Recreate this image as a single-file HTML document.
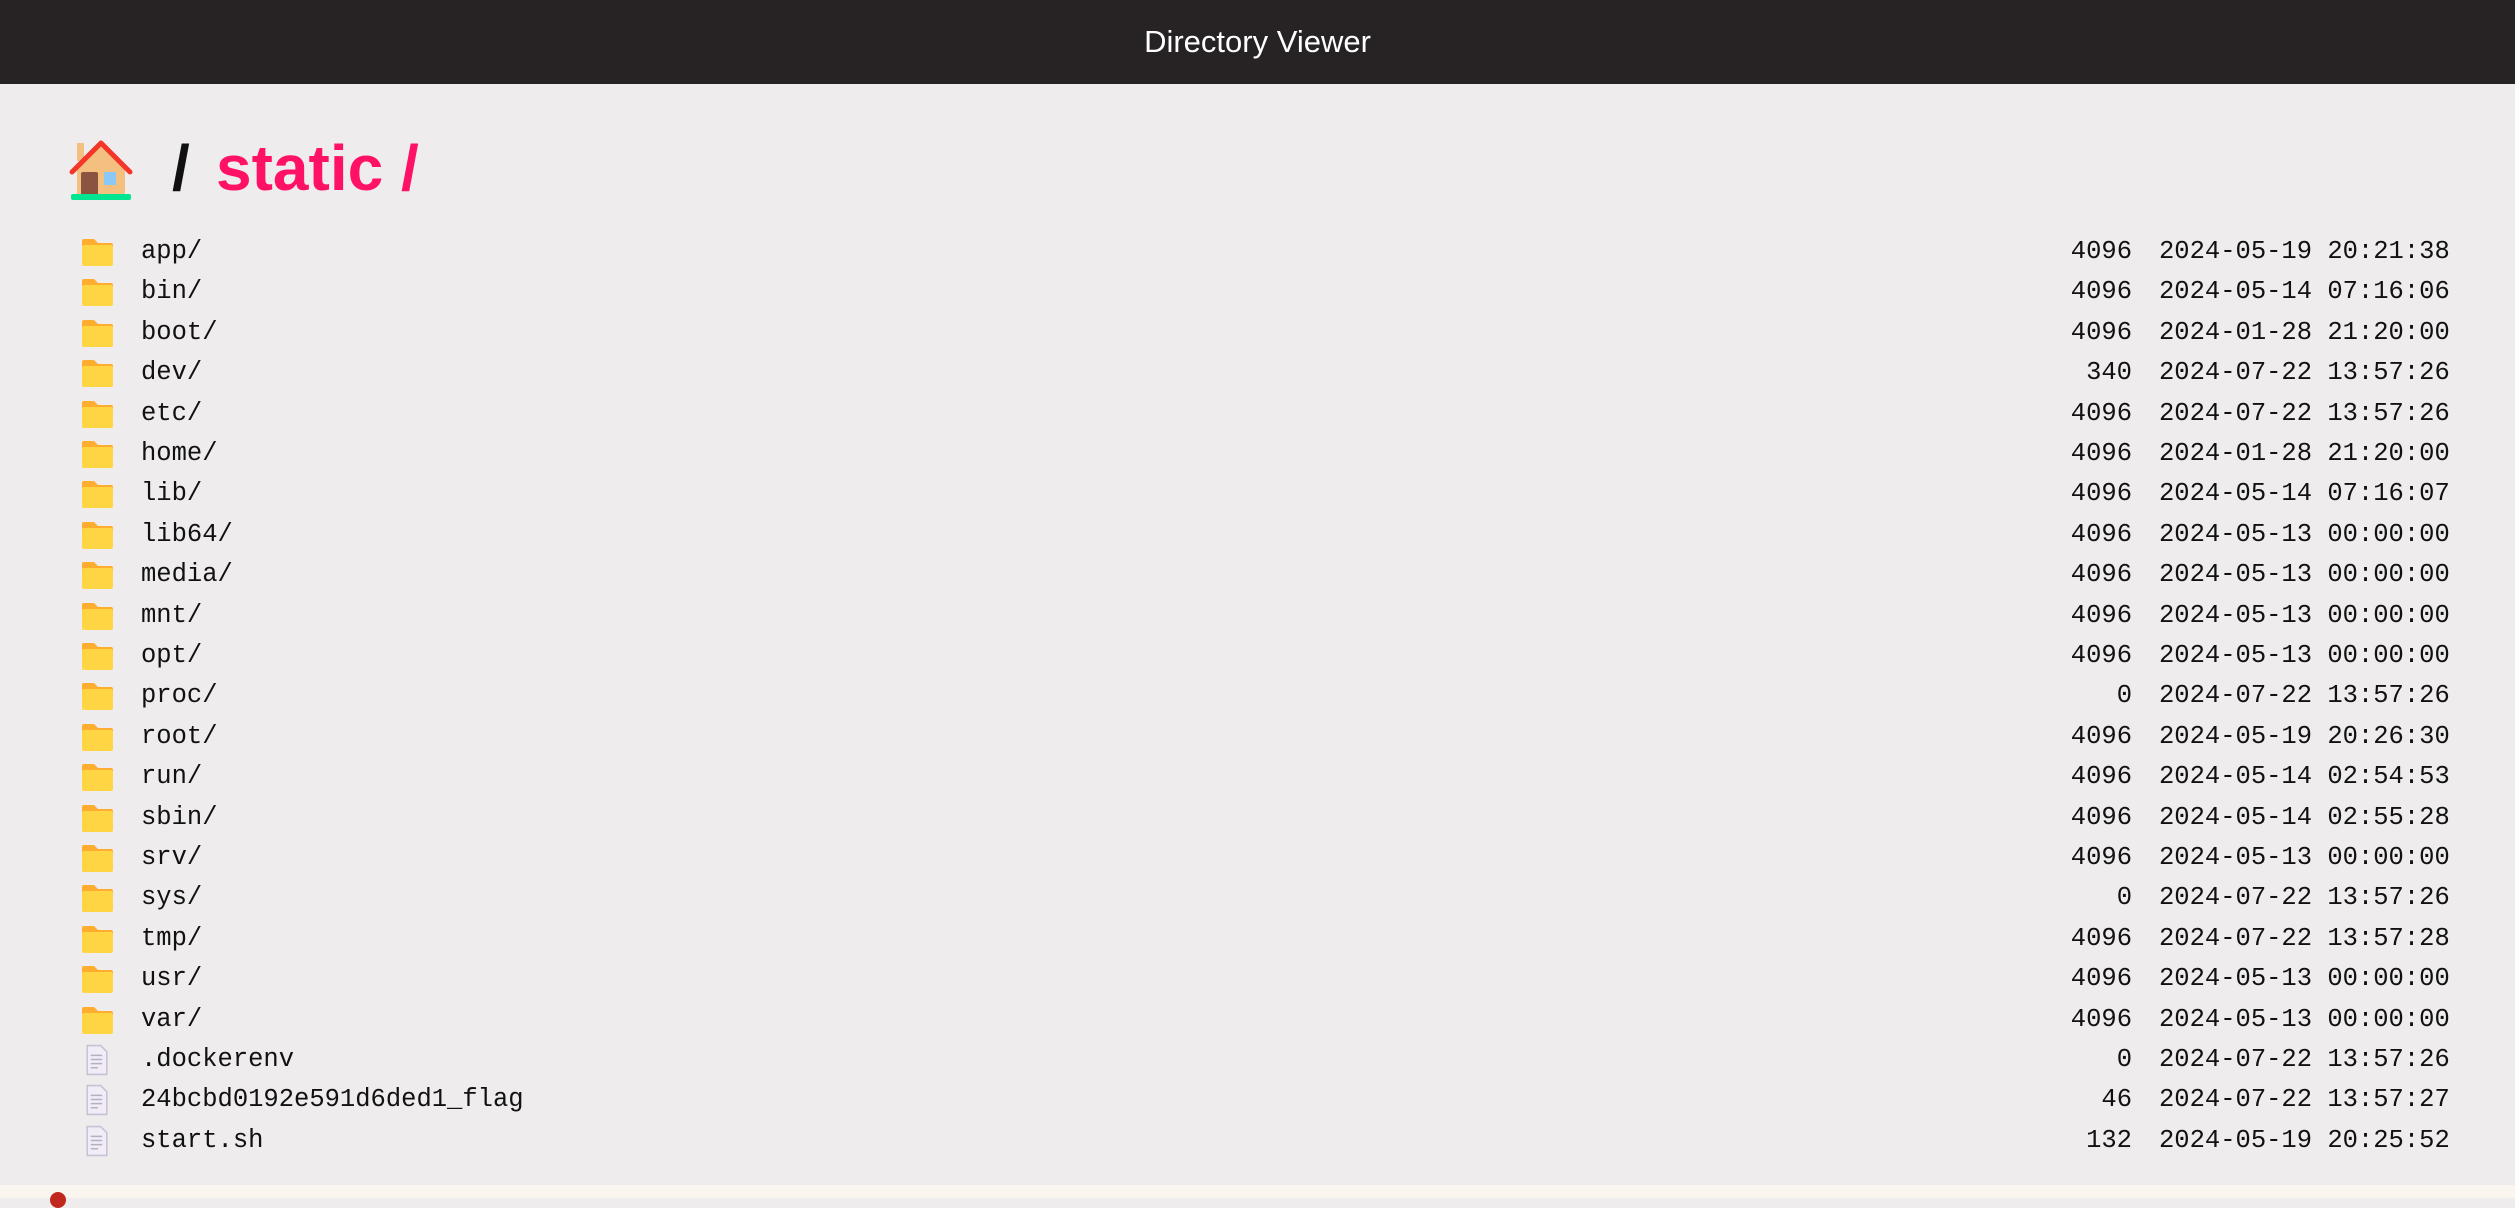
<!DOCTYPE html>
<html><head><meta charset="utf-8"><style>
body{margin:0;width:2515px;height:1198px;background:#eeeced;position:relative;overflow:hidden;font-family:"Liberation Sans",sans-serif}
.hd{position:absolute;left:0;top:0;width:2515px;height:84px;background:#272324;color:#fff;font-size:31px;text-align:center;line-height:84px}
.h1{position:absolute;top:128px;font-size:64px;font-weight:bold;line-height:80px;white-space:pre}
.row{position:absolute;left:0;width:2515px;height:40px;font-family:"Liberation Mono",monospace;font-size:25.5px;color:#111;line-height:40px}
.row .n{position:absolute;left:141px}
.row .s{position:absolute;right:383px}
.row .d{position:absolute;left:2159px}
.row svg{position:absolute;top:5px}
.bb{position:absolute;left:0;top:1185px;width:2515px;height:13px;background:#fbf5ef}
</style></head><body>
<div class="hd">Directory Viewer</div>
<svg style="position:absolute;left:69px;top:140px" width="64" height="60" viewBox="0 0 64 60">
<rect x="8" y="3" width="7" height="18" fill="#f3c07f"/>
<polygon points="32,4 8,30 8,55 56,55 56,30" fill="#f3c07f"/>
<polyline points="3,32 32,3 61,32" fill="none" stroke="#f4352a" stroke-width="5" stroke-linecap="round" stroke-linejoin="round"/>
<rect x="12" y="32" width="17" height="23" rx="2" fill="#8a5440"/>
<rect x="35" y="32" width="12" height="13" fill="#8ac8f8"/>
<rect x="2" y="54" width="60" height="6" rx="2" fill="#00e58f"/>
</svg>
<div class="h1" style="left:172px;color:#111">/</div>
<div class="h1" style="left:216px;color:#ff1166">static /</div>
<div id="rows"></div>
<div class="bb"></div>
<div style="position:absolute;left:50px;top:1192px;width:16px;height:16px;border-radius:50%;background:#c0281e"></div>
<script>
var d=[["app/",4096,"2024-05-19 20:21:38"],["bin/",4096,"2024-05-14 07:16:06"],["boot/",4096,"2024-01-28 21:20:00"],["dev/",340,"2024-07-22 13:57:26"],["etc/",4096,"2024-07-22 13:57:26"],["home/",4096,"2024-01-28 21:20:00"],["lib/",4096,"2024-05-14 07:16:07"],["lib64/",4096,"2024-05-13 00:00:00"],["media/",4096,"2024-05-13 00:00:00"],["mnt/",4096,"2024-05-13 00:00:00"],["opt/",4096,"2024-05-13 00:00:00"],["proc/",0,"2024-07-22 13:57:26"],["root/",4096,"2024-05-19 20:26:30"],["run/",4096,"2024-05-14 02:54:53"],["sbin/",4096,"2024-05-14 02:55:28"],["srv/",4096,"2024-05-13 00:00:00"],["sys/",0,"2024-07-22 13:57:26"],["tmp/",4096,"2024-07-22 13:57:28"],["usr/",4096,"2024-05-13 00:00:00"],["var/",4096,"2024-05-13 00:00:00"],[".dockerenv",0,"2024-07-22 13:57:26"],["24bcbd0192e591d6ded1_flag",46,"2024-07-22 13:57:27"],["start.sh",132,"2024-05-19 20:25:52"]];
var fo='<svg style="left:82px" width="31" height="29" viewBox="0 0 31 29"><path d="M2 2h10l4 4h13a2 2 0 0 1 2 2v4H0V4a2 2 0 0 1 2-2z" fill="#ffad2f"/><rect x="0" y="8" width="31" height="21" rx="2" fill="#ffd543"/></svg>';
var fi='<svg style="left:85px;top:4px" width="24" height="32" viewBox="0 0 22 31"><path d="M1.5 1.5h13l6 6v22h-19z" fill="#f1ecf6" stroke="#c9c2d6" stroke-width="1.5"/><path d="M5 11h11M5 15h11M5 19h11M5 23h7" stroke="#b6afc4" stroke-width="1.5"/></svg>';
var h='';d.forEach(function(r,i){var y=232+i*40.4;h+='<div class="row" style="top:'+y+'px">'+(i<20?fo:fi)+'<span class="n">'+r[0]+'</span><span class="s">'+r[1]+'</span><span class="d">'+r[2]+'</span></div>';});
document.getElementById('rows').innerHTML=h;
</script>
</body></html>
